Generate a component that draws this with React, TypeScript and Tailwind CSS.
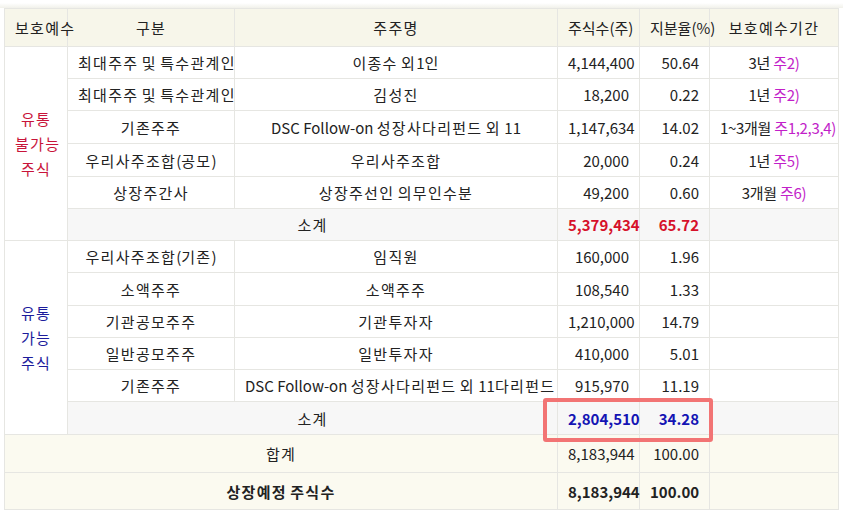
import type { ReactNode } from "react";

type Row = { cat: string; name: string; shares: string; pct: string; period?: string; note?: string; h: string };

const locked: Row[] = [
  { cat: "최대주주 및 특수관계인", name: "이종수 외1인", shares: "4,144,400", pct: "50.64", period: "3년", note: "주2)", h: "h-[32px]" },
  { cat: "최대주주 및 특수관계인", name: "김성진", shares: "18,200", pct: "0.22", period: "1년", note: "주2)", h: "h-[32px]" },
  { cat: "기존주주", name: "DSC Follow-on 성장사다리펀드 외 11", shares: "1,147,634", pct: "14.02", period: "1~3개월", note: "주1,2,3,4)", h: "h-[33px]" },
  { cat: "우리사주조합(공모)", name: "우리사주조합", shares: "20,000", pct: "0.24", period: "1년", note: "주5)", h: "h-[33px]" },
  { cat: "상장주간사", name: "상장주선인 의무인수분", shares: "49,200", pct: "0.60", period: "3개월", note: "주6)", h: "h-[32px]" },
];

const free: Row[] = [
  { cat: "우리사주조합(기존)", name: "임직원", shares: "160,000", pct: "1.96", h: "h-[32px]" },
  { cat: "소액주주", name: "소액주주", shares: "108,540", pct: "1.33", h: "h-[33px]" },
  { cat: "기관공모주주", name: "기관투자자", shares: "1,210,000", pct: "14.79", h: "h-[32px]" },
  { cat: "일반공모주주", name: "일반투자자", shares: "410,000", pct: "5.01", h: "h-[32px]" },
  { cat: "기존주주", name: "DSC Follow-on 성장사다리펀드 외 11다리펀드", shares: "915,970", pct: "11.19", h: "h-[32px]" },
];

const td = "border border-[#e6e6e2] px-[10px]";

// hangul in the reference font is a bit wider than in Noto, so pad those runs
function Ko({ text }: { text: string }) {
  return (
    <>
      {text.split(/([가-힣]+)/).map((part, i) =>
        /[가-힣]/.test(part) ? (
          <span key={i} className="tracking-[1.3px]">
            {part}
          </span>
        ) : (
          part
        )
      )}
    </>
  );
}

function Cell({ children, className = "", ...rest }: { children?: ReactNode; className?: string; colSpan?: number; rowSpan?: number }) {
  return (
    <td className={`${td} ${className}`} {...rest}>
      {children}
    </td>
  );
}

function DataRow({ r, first }: { r: Row; first?: ReactNode }) {
  return (
    <tr className={r.h}>
      {first}
      <Cell className="whitespace-nowrap px-0 text-center">
        <Ko text={r.cat} />
      </Cell>
      <Cell className="whitespace-nowrap px-0 text-center">
        <Ko text={r.name} />
      </Cell>
      <Cell className="text-right">{r.shares}</Cell>
      <Cell className="text-right">{r.pct}</Cell>
      <Cell className="whitespace-nowrap px-0 text-center tracking-[-0.3px]">
        {r.period && (
          <>
            {r.period} <span className="text-[#c21fc9]">{r.note}</span>
          </>
        )}
      </Cell>
    </tr>
  );
}

function Side({ lines, color }: { lines: string[]; color: string }) {
  return (
    <Cell rowSpan={6} className={`whitespace-nowrap bg-white px-0 text-center leading-[25px] ${color}`}>
      {lines.map((l, i) => (
        <div key={i}>
          <Ko text={l} />
        </div>
      ))}
    </Cell>
  );
}

export default function App() {
  return (
    <div
      className="relative h-[513px] w-[843px] bg-white pl-[4px] pt-[8px] text-[15px] text-[#222]"
      style={{ fontFamily: '"Noto Sans CJK KR", "Noto Sans", sans-serif' }}
    >
      <div className="absolute left-0 right-0 top-[3px] h-[5px] bg-gradient-to-b from-white to-[#f1f1ea]" />
      <table className="w-[834px] table-fixed border-collapse leading-none">
        <colgroup>
          <col className="w-[63px]" />
          <col className="w-[167px]" />
          <col className="w-[323px]" />
          <col className="w-[82px]" />
          <col className="w-[70px]" />
          <col className="w-[129px]" />
        </colgroup>
        <thead>
          <tr className="h-[38px] bg-[#f7f6ea]">
            <th className={`${td} whitespace-nowrap px-0 font-normal`}>
              <Ko text="보호예수" />
            </th>
            <th className={`${td} font-normal`}>
              <Ko text="구분" />
            </th>
            <th className={`${td} font-normal`}>
              <Ko text="주주명" />
            </th>
            <th className={`${td} whitespace-nowrap px-0 font-normal`}>주식수(주)</th>
            <th className={`${td} whitespace-nowrap px-0 font-normal`}>지분율(%)</th>
            <th className={`${td} font-normal`}>
              <Ko text="보호예수기간" />
            </th>
          </tr>
        </thead>
        <tbody>
          {locked.map((r, i) => (
            <DataRow key={i} r={r} first={i === 0 ? <Side lines={["유통", "불가능", "주식"]} color="text-[#c8143a]" /> : undefined} />
          ))}
          <tr className="h-[32px] bg-[#f7f7f7]">
            <Cell colSpan={2} className="text-center">
              <Ko text="소계" />
            </Cell>
            <Cell className="text-right font-bold text-[#d6112a]">5,379,434</Cell>
            <Cell className="text-right font-bold text-[#d6112a]">65.72</Cell>
            <Cell />
          </tr>
          {free.map((r, i) => (
            <DataRow key={i} r={r} first={i === 0 ? <Side lines={["유통", "가능", "주식"]} color="text-[#1c1c9c]" /> : undefined} />
          ))}
          <tr className="h-[33px] bg-[#f7f7f7]">
            <Cell colSpan={2} className="text-center">
              <Ko text="소계" />
            </Cell>
            <Cell className="text-right font-bold text-[#1414b4]">2,804,510</Cell>
            <Cell className="text-right font-bold text-[#1414b4]">34.28</Cell>
            <Cell />
          </tr>
          <tr className="h-[38px] bg-[#fbfaf0]">
            <Cell colSpan={3} className="text-center">
              <Ko text="합계" />
            </Cell>
            <Cell className="text-right">8,183,944</Cell>
            <Cell className="text-right">100.00</Cell>
            <Cell />
          </tr>
          <tr className="h-[37px] bg-[#fbfaf0]">
            <Cell colSpan={3} className="text-center font-bold">
              <Ko text="상장예정 주식수" />
            </Cell>
            <Cell className="text-right font-bold">8,183,944</Cell>
            <Cell className="text-right font-bold">100.00</Cell>
            <Cell />
          </tr>
        </tbody>
      </table>
      <div className="absolute left-[543px] top-[398px] h-[44px] w-[170px] rounded-[3px] border-[4px] border-[#f27474]" />
    </div>
  );
}
